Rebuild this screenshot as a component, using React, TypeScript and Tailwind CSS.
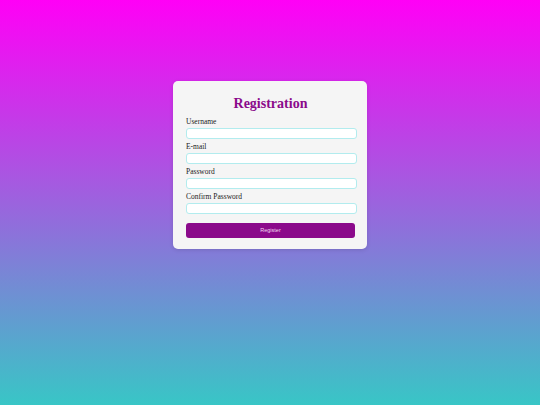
// Registration form on a magenta → turquoise gradient.
const FIELDS = [
  { id: "username", label: "Username", type: "text" },
  { id: "email", label: "E-mail", type: "email" },
  { id: "password", label: "Password", type: "password" },
  { id: "confirm", label: "Confirm Password", type: "password" },
];

function Field({ id, label, type }: { id: string; label: string; type: string }) {
  return (
    <div className="mb-[4px]">
      <label
        htmlFor={id}
        className="block text-[7.5px] leading-[8px] mb-[2px] text-[#222]"
      >
        {label}
      </label>
      <input
        id={id}
        type={type}
        className="block w-[171px] h-[11px] rounded-[3px] border border-[#b2ecee] bg-white outline-none"
      />
    </div>
  );
}

export default function App() {
  return (
    <div className="min-h-[405px] w-full bg-[linear-gradient(to_bottom,#ff00f6,#38c6c6)] flex justify-center font-['Liberation_Serif','Times_New_Roman',serif]">
      <div className="mt-[81px] mb-auto w-[194px] bg-[#f5f5f5] rounded-[5px] shadow-[0_1px_4px_rgba(0,0,0,0.12)] pl-[13px] pr-[12px] pt-[15px] pb-[11px]">
        <h1 className="text-center text-[14px] leading-[16px] font-bold text-[#8b0a8b] mb-[6px]">
          Registration
        </h1>
        {FIELDS.map((f) => (
          <Field key={f.id} {...f} />
        ))}
        <button
          type="button"
          className="mt-[9px] block w-full h-[15px] rounded-[3px] bg-[#8b0a8b] text-[#f0d8f0] text-[5.5px] font-['Liberation_Sans',Arial,sans-serif]"
        >
          Register
        </button>
      </div>
    </div>
  );
}
